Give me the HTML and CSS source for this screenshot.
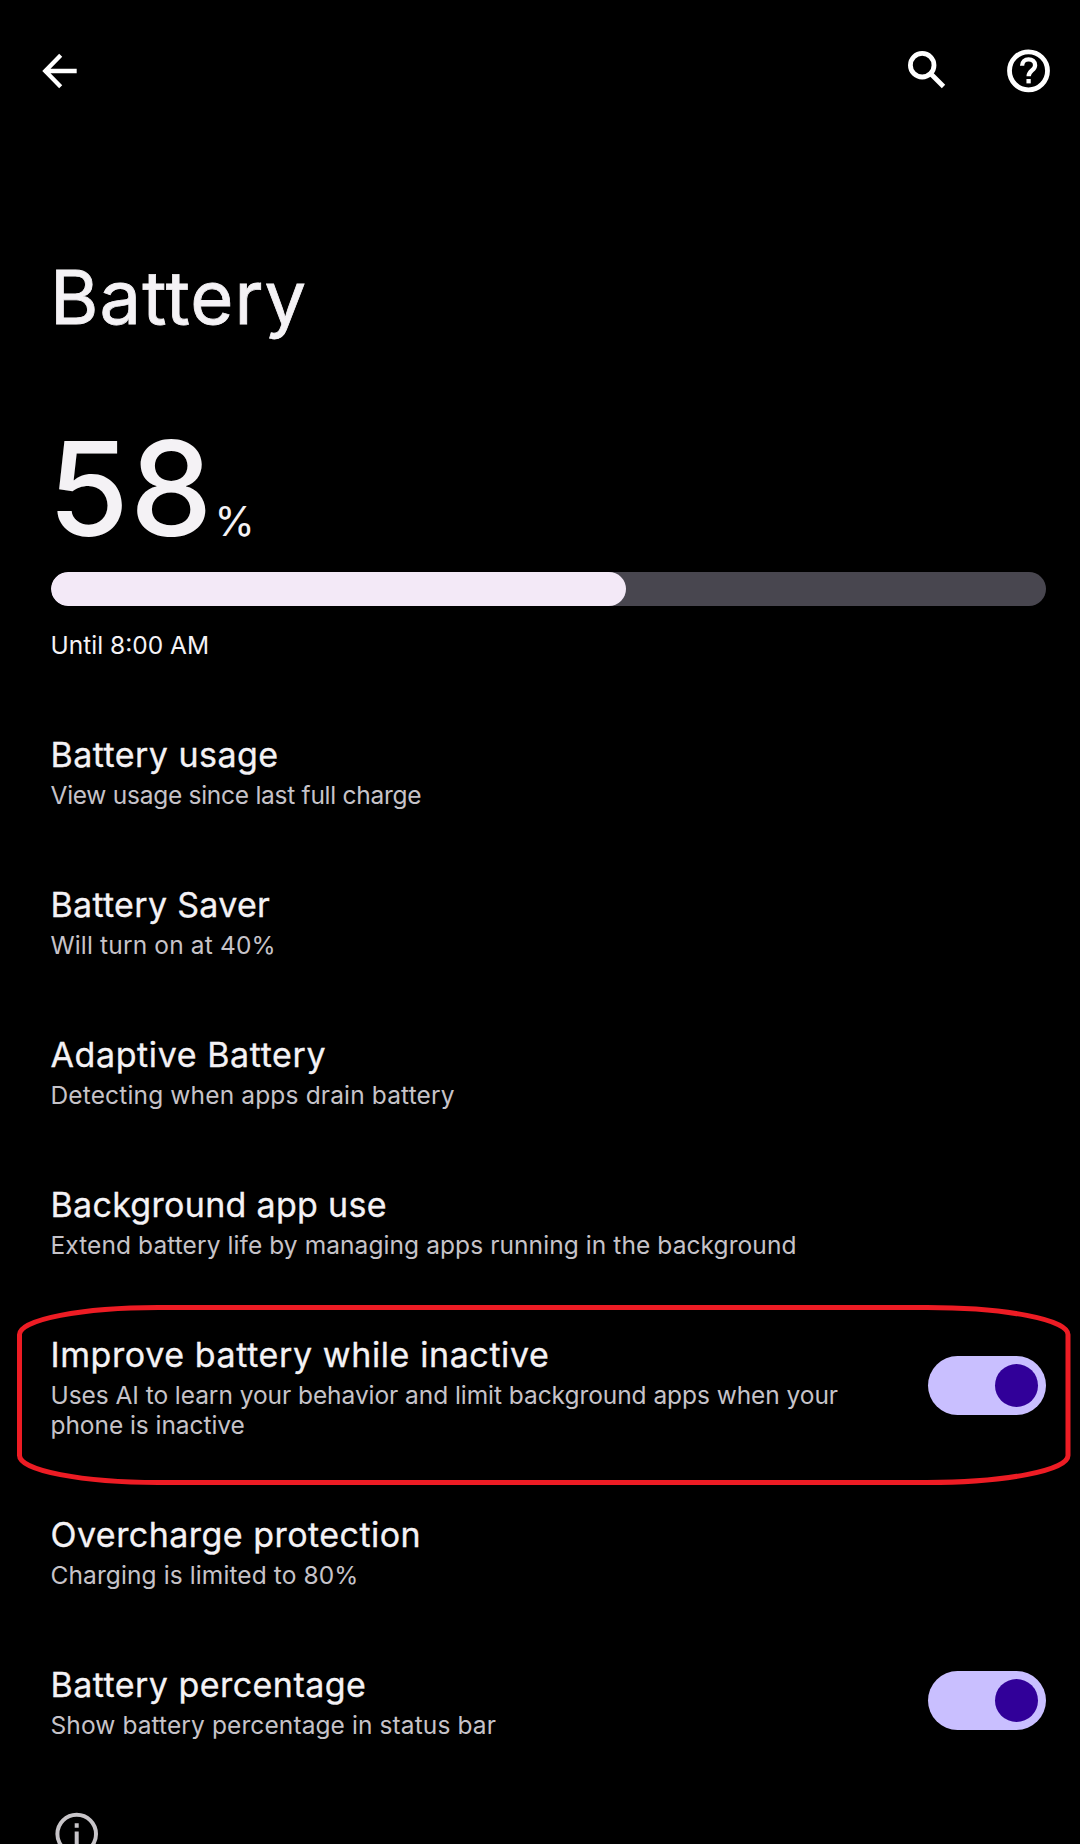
FILE: index.html
```
<!DOCTYPE html>
<html lang="en">
<head>
<meta charset="utf-8">
<title>Battery</title>
<link rel="stylesheet" href="styles.css">
</head>
<body>
<header class="toolbar">
  <svg class="icon-back" viewBox="0 0 36 36"><path d="M34.700 18H4M18.700 2.300 3.300 18l15.400 15.700"/></svg>
  <svg class="icon-search" viewBox="0 0 40 40"><circle cx="15.2" cy="15.2" r="11.8"/><path d="M23.5 23.5 36.500 36.500"/></svg>
  <svg class="icon-help" viewBox="0 0 44 44"><circle cx="21.500" cy="21.800" r="19"/><path class="hook" d="M15.100 16.800c0-3.900 2.900-6.500 6.500-6.500s6.500 2.500 6.500 5.900c0 5-6.500 5.600-6.500 11.100"/><path class="dot" d="M21.600 30v4.400"/></svg>
</header>
<main>
  <h1 class="title">Battery</h1>
  <section class="level">
    <div class="reading"><span class="value">58</span><span class="unit">%</span></div>
    <div class="meter"><div class="meter-fill" style="width: 57.8%"></div></div>
    <p class="until">Until 8:00 AM</p>
  </section>
  <ul class="list">
    <li class="row"><div class="text"><h2>Battery usage</h2><p class="snug">View usage since last full charge</p></div></li>
    <li class="row"><div class="text"><h2 class="even">Battery Saver</h2><p class="open">Will turn on at 40%</p></div></li>
    <li class="row"><div class="text"><h2 class="wide">Adaptive Battery</h2><p class="open">Detecting when apps drain battery</p></div></li>
    <li class="row"><div class="text"><h2 class="even">Background app use</h2><p class="extend">Extend battery life by managing apps running in the background</p></div></li>
    <li class="row marked">
      <div class="text"><h2 class="wide">Improve battery while inactive</h2><p class="long">Uses AI to learn your behavior and limit background apps when your<br>phone is inactive</p></div>
      <div class="switch"><div class="knob"></div></div>
      <svg class="ring" viewBox="0 0 1054 181"><path d="M142 2.500H910A141 27 0 0 1 1051 29.500V150.500A141 27 0 0 1 910 177.500H142A139 27 0 0 1 2.500 150.500V29.500A139 27 0 0 1 142 2.500Z"/></svg>
    </li>
    <li class="row"><div class="text"><h2>Overcharge protection</h2><p>Charging is limited to 80%</p></div></li>
    <li class="row"><div class="text"><h2>Battery percentage</h2><p>Show battery percentage in status bar</p></div><div class="switch"><div class="knob"></div></div></li>
  </ul>
  <svg class="icon-info" viewBox="0 0 44 44"><circle cx="21.700" cy="22" r="19.300"/><path d="M21.700 11.300v4.400M21.700 19.500v13"/></svg>
</main>
</body>
</html>
```
FILE: styles.css
```
* { box-sizing: border-box; }

body {
  margin: 0;
  height: 1844px;
  overflow: hidden;
  background: #000;
  color: #f4f2f5;
  font-family: Inter, "Liberation Sans", sans-serif;
}

h1, h2, p, ul { margin: 0; padding: 0; font-weight: 400; }
ul { list-style: none; }
svg { display: block; fill: none; }

.toolbar {
  display: flex;
  align-items: center;
  height: 142px;
  padding: 0 29px 0 42px;
}
.toolbar svg { stroke: #fff; flex: none; }
.icon-back { width: 36px; height: 36px; stroke-width: 4.3; }
.icon-search { width: 40px; height: 40px; margin: 0 60px 2px auto; stroke-width: 4.8; }
.icon-help { width: 44px; height: 44px; margin-bottom: 1px; stroke-width: 4.8; }
.icon-help .hook, .icon-help .dot { stroke-width: 4.3; }

.title {
  padding: 106px 0 0 50px;
  font-size: 74px;
  line-height: 98px;
  letter-spacing: 1.1px;
  -webkit-text-stroke: 0.8px currentColor;
}

.level { padding: 78px 34px 0 51px; }
.reading { display: flex; align-items: baseline; margin-left: -3px; height: 148px; line-height: 130px; }
.value { font-size: 131px; font-weight: 500; letter-spacing: 1px; }
.unit { font-size: 41px; margin-left: 1px; }
.meter { height: 34px; border-radius: 17px; background: #48464f; overflow: hidden; }
.meter-fill { height: 100%; border-radius: 17px; background: #f3e9f7; }
.until { margin-left: -0.5px; padding-top: 24px; font-size: 24.5px; line-height: 30px; }

.list { padding: 75px 34px 0 51px; }
.row {
  position: relative;
  display: flex;
  align-items: center;
  justify-content: space-between;
  margin-bottom: 75px;
}
.text { margin-left: -0.5px; }
h2 {
  font-size: 34px;
  line-height: 40px;
  letter-spacing: 0.46px;
  -webkit-text-stroke: 0.3px currentColor;
}
h2.wide { letter-spacing: 0.6px; }
h2.even { letter-spacing: 0.3px; }
.row p {
  padding-top: 5px;
  font-size: 24.5px;
  line-height: 30px;
  letter-spacing: 0.1px;
  color: #c6c3c9;
  white-space: nowrap;
}
.row p.open { letter-spacing: 0.15px; }
.row p.snug { letter-spacing: -0.27px; }
.row p.extend { letter-spacing: 0.08px; }
.row p.long { letter-spacing: -0.06px; }

.switch {
  flex: none;
  display: flex;
  align-items: center;
  justify-content: flex-end;
  width: 118px;
  height: 59px;
  margin-bottom: 5px;
  padding-right: 8px;
  border-radius: 30px;
  background: #c9bfff;
}
.knob { width: 43px; height: 43px; border-radius: 50%; background: #310099; }

/* Callout around the highlighted setting */
.ring {
  position: absolute;
  left: -34px;
  top: -30px;
  width: 1054px;
  height: 181px;
  stroke: #ed1c24;
  stroke-width: 5;
}

.icon-info { width: 44px; height: 44px; margin: -3px 0 0 55px; stroke: #c8c5c9; stroke-width: 4; }
```
